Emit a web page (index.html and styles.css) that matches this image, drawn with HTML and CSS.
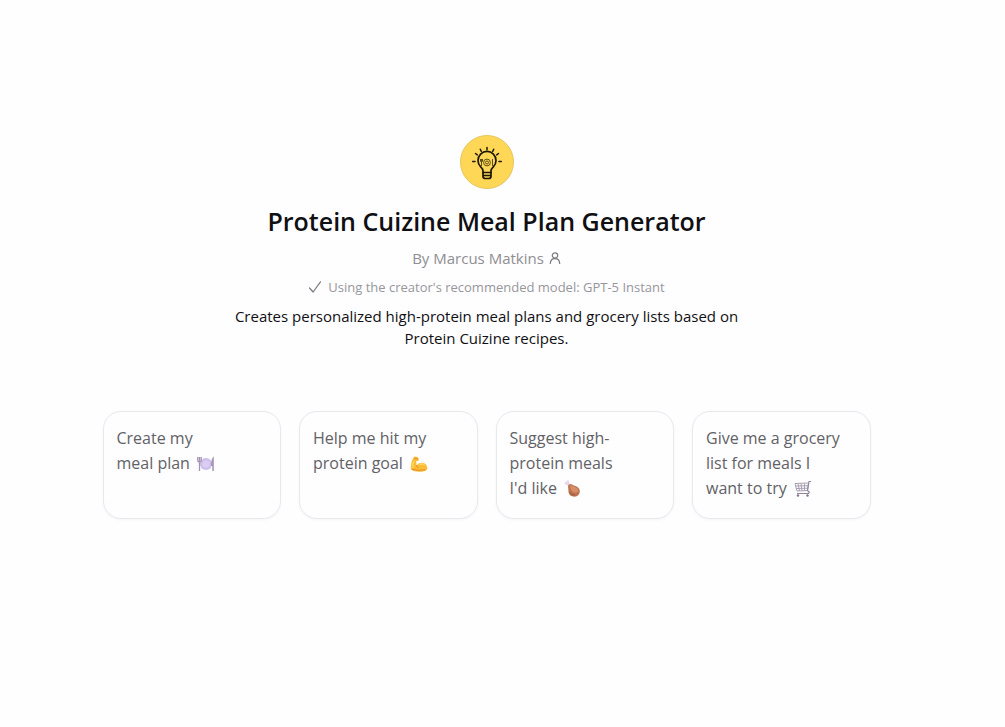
FILE: index.html
```html
<!DOCTYPE html>
<html lang="en">
<head>
<meta charset="utf-8">
<meta name="viewport" content="width=device-width, initial-scale=1">
<title>Protein Cuizine Meal Plan Generator</title>
<link rel="stylesheet" href="styles.css">
</head>
<body>
<main class="page">
  <header class="intro">
    <svg class="avatar" viewBox="0 0 54 54" aria-hidden="true">
      <circle cx="27" cy="27" r="26.5" fill="#fdd755" stroke="#e6c65c"/>
      <g fill="none" stroke="#1c1705" stroke-width="1.7" stroke-linecap="round" stroke-linejoin="round">
        <path d="M23 37.500v-1.500c0-1.800-1-3-2.300-4.200a9 9 0 1 1 12.600 0c-1.300 1.200-2.300 2.400-2.300 4.200v1.500z"/>
        <path d="M23 37.500v3.700q0 2.300 2.300 2.300h3.400q2.300 0 2.300-2.300v-3.700M23.500 40.500h7"/>
        <path d="M27 12.500v2.300M20.300 14.300l1 2.200M33.700 14.300l-1 2.200M15.500 18.500l1.800 1.400M38.500 18.500l-1.800 1.400M12.700 26.500h2.300M39 26.500h2.300" stroke-width="1.500"/>
      </g>
      <g fill="none" stroke="#5d501b" stroke-width="1">
        <circle cx="27" cy="27.500" r="3.400"/><circle cx="27" cy="27.500" r="1.500"/>
        <path d="M21.500 24v7M32.500 24v7M20.500 24v2.500h2V24"/>
      </g>
    </svg>
    <h1 class="title">Protein Cuizine Meal Plan Generator</h1>
    <div class="author">
      <span>By Marcus Matkins</span>
      <svg class="person" viewBox="0 0 12 14" aria-hidden="true"><circle cx="6" cy="4.500" r="2.700"/><path d="M1.300 12.500C1.500 9.300 3.300 7.600 6 7.600s4.500 1.700 4.700 4.900"/></svg>
    </div>
    <div class="model">
      <svg class="check" viewBox="0 0 14 14" aria-hidden="true"><path d="M1.500 8l3.600 4L12.500 1.800"/></svg>
      <span>Using the creator's recommended model: GPT-5 Instant</span>
    </div>
    <p class="description">Creates personalized high-protein meal plans and grocery lists based on Protein Cuizine recipes.</p>
  </header>
  <section class="prompts" aria-label="Conversation starters">
    <button class="prompt" type="button"><span>Create my<br>meal plan
      <svg class="emoji" viewBox="0 0 18 18" aria-hidden="true">
        <circle cx="9" cy="9" r="6" fill="#cdbde9"/><circle cx="9" cy="9" r="3.800" fill="#dacdf2"/>
        <path d="M.8 2v3.500q0 1.500 1.700 1.500t1.700-1.500V2M2.500 2v14" fill="none" stroke="#a594b2" stroke-width="1.300"/>
        <path d="M16.800 1.500v14.500h-1.500v-5h-1.300q0-7.500 2.800-9.500z" fill="#a594b2"/>
      </svg></span>
    </button>
    <button class="prompt" type="button"><span>Help me hit my<br>protein goal
      <svg class="emoji" viewBox="0 0 18 18" aria-hidden="true">
        <path d="M3.600 2.200Q5 .8 7.500 2l1.300 1.800q.4 1.700-1.300 2.200l-1.400.3.500 4.200q1.600-2.700 4.900-2.800 5 .1 5.700 4.500.4 3.300-3.300 4.100-5.300 1.200-10.200-.2Q.7 15.300.8 12.300 1 6.400 3.600 2.200z" fill="#fbbd35"/>
        <path d="M6.600 10.500q.2 1.800 1.700 2.300M4.500 3.400l3 .4M2 14.300q6 2.200 13 .5" fill="none" stroke="#e98a2b" stroke-width="1" stroke-linecap="round"/>
        <path d="M3.700 6.500q-1.300 3.500-1 6M10 9.500q2-1.200 4 .1" fill="none" stroke="#ffdc68" stroke-width="1.200" stroke-linecap="round"/>
      </svg></span>
    </button>
    <button class="prompt" type="button"><span>Suggest high-<br>protein meals<br>I'd like
      <svg class="emoji" viewBox="0 0 18 18" aria-hidden="true">
        <path d="M6 6L3 3" stroke="#d9cddd" stroke-width="2.400"/><circle cx="2.200" cy="3.200" r="1.600" fill="#e5dce9"/><circle cx="3.900" cy="1.800" r="1.500" fill="#e5dce9"/>
        <path d="M4 6q.8-2 3-2 2.200 1.200 5 2.200 4 1.700 3.800 5.600-.5 4.500-5.300 4.900-5.300-.1-6-4.600Q4.400 9 4 6z" fill="#bd7350"/>
        <path d="M6 5.300q3 .7 5.500 2 3 1.500 2.700 4-1.700 2.300-4.700 1Q6.500 10.500 6 5.300z" fill="#d78e67"/><path d="M6 12.500q1.600 3 5 2.500" fill="none" stroke="#9c5541"/>
      </svg></span>
    </button>
    <button class="prompt" type="button"><span>Give me a grocery<br>list for meals I<br>want to try
      <svg class="emoji" viewBox="0 0 18 18" aria-hidden="true">
        <g fill="none" stroke="#aaa1b2" stroke-width="1"><path d="M1 3.500l13.500-.5-1 7.500-10.500.5zM1.500 6l12.500-.3M2.300 8.500l11.500-.3M4 3.500l1.500 7.500M7 3.500l1 7.500M10.500 3.500v7"/><path d="M17 1.500h-2l-1.500 9 1.800 1.700-.8 1.300H3" stroke="#90869a" stroke-width="1.200" stroke-linejoin="round"/></g>
        <circle cx="4" cy="15.500" r="1.200" fill="#81768b"/><circle cx="13.500" cy="15.500" r="1.200" fill="#81768b"/>
      </svg></span>
    </button>
  </section>
</main>
</body>
</html>
```

FILE: styles.css
```css
* {
  box-sizing: border-box;
}

body {
  margin: 0;
  background: #fefdff;
  color: #101012;
  font-family: "Segoe UI", "Open Sans", "Noto Sans", sans-serif;
}

.page {
  display: flex;
  flex-direction: column;
  align-items: center;
  gap: 62px;
  padding: 135px 48px 48px 16px;
}

.intro {
  display: flex;
  flex-direction: column;
  align-items: center;
  max-width: 520px;
  text-align: center;
}

.avatar {
  width: 54px;
  height: 54px;
}

.title {
  margin: 13px 0 0;
  font-size: 25px;
  font-weight: 600;
  line-height: 38px;
  white-space: nowrap;
}

.author {
  display: flex;
  align-items: center;
  gap: 5px;
  margin-top: 6px;
  color: #8f8f92;
  font-size: 15px;
  line-height: 24px;
}

.person,
.check {
  fill: none;
  stroke: #7b7b7f;
  stroke-width: 1.2;
  stroke-linecap: round;
  stroke-linejoin: round;
}

.person {
  width: 12px;
  height: 14px;
}

.model {
  display: flex;
  align-items: center;
  gap: 6px;
  margin-top: 7px;
  color: #97979a;
  font-size: 13px;
  line-height: 20px;
}

.check {
  width: 14px;
  height: 14px;
}

.description {
  margin: 8px 0 0;
  font-size: 15px;
  line-height: 22px;
}

.prompts {
  display: grid;
  grid-template-columns: repeat(4, 1fr);
  gap: 18px;
  width: 100%;
  max-width: 768px;
}

.prompt {
  display: flex;
  align-items: flex-start;
  min-height: 108px;
  padding: 14px 13px;
  border: 1px solid #e9e8eb;
  border-radius: 18px;
  background: #fefdff;
  box-shadow: 0 1px 3px rgba(0, 0, 0, 0.04);
  color: #626265;
  font: inherit;
  font-size: 16px;
  line-height: 25px;
  text-align: left;
  white-space: nowrap;
}

.emoji {
  width: 18px;
  height: 18px;
  margin-left: 3px;
  vertical-align: -4px;
}
```
